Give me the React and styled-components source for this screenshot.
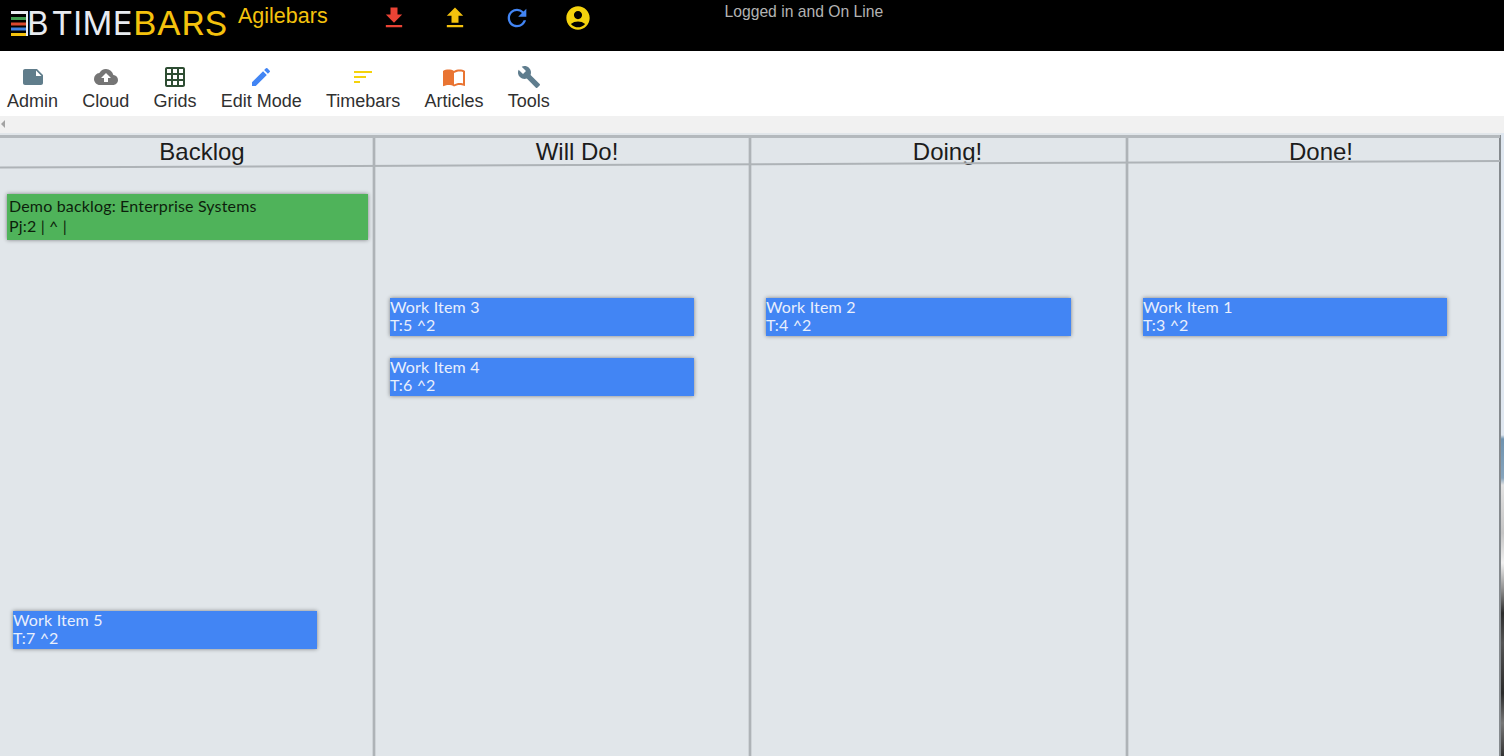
import React from "react";
import styled, { createGlobalStyle } from "styled-components";
import {
  MdFileDownload, MdFileUpload, MdRefresh, MdAccountCircle, MdNote, MdCloudUpload,
  MdGridOn, MdEdit, MdSort, MdImportContacts, MdBuild,
} from "react-icons/md";

const Global = createGlobalStyle`
  html, body { margin: 0; padding: 0; height: 100%; overflow: hidden; background: #e1e6ea; }
  #root { height: 756px; }
  * { box-sizing: border-box; }
`;
const Page = styled.div`
  width: 1504px; height: 756px; display: flex; flex-direction: column; overflow: hidden;
  font-family: "Liberation Sans", Arial, sans-serif;
`;
const Header = styled.header`
  height: 51px; background: #000; display: flex; align-items: flex-start; flex: none;
`;
const Logo = styled.div`
  display: flex; align-items: flex-start; margin: 3px 0 0 11px; width: 217px; height: 36px; white-space: nowrap;
`;
const LogoMark = styled.svg`
  width: 17px; height: 25px; margin-top: 8px; flex: none;
`;
const LogoWord = styled.span`
  font: 400 33px/40px Inter, sans-serif; color: ${p => p.$color};
  letter-spacing: ${p => p.$spacing || 0}px; margin-left: ${p => p.$gap || 0}px;
  transform: scaleX(${p => p.$stretch || 1}); transform-origin: left center;
`;
const AppName = styled.div`
  color: #f4c20d; font-size: 21.5px; line-height: 24px; margin: 4px 0 0 10px; width: 141.5px;
`;
const HeaderIcons = styled.div`
  display: flex; gap: 33.5px; margin-top: 4px; width: 345.5px; flex: none;
`;
const HeaderIcon = styled.span`
  display: flex; width: 28px; height: 28px; color: ${p => p.$color};
  svg { width: 28px; height: 28px; }
`;
const Status = styled.div`
  color: #b3b3b3; font-size: 15.7px; line-height: 16px; margin: 4px 0 0 -0.5px;
`;
const Nav = styled.nav`
  height: 65px; background: #fff; display: flex; gap: 24.2px; padding: 14px 0 0 7px; flex: none;
`;
const NavItem = styled.div`
  display: flex; flex-direction: column; align-items: center;
  color: #303030; font-size: 18px; line-height: 22px; white-space: nowrap;
`;
const NavIcon = styled.span`
  display: flex; width: 24px; height: 24px; margin-bottom: 1px; color: ${p => p.$color};
  svg { width: 24px; height: 24px; }
`;
const ScrollStrip = styled.div`
  height: 17px; background: #f1f1f1; flex: none; display: flex; align-items: center; padding-left: 1px;
`;
const ScrollArrow = styled.span`
  width: 0; height: 0; margin-top: -1px;
  border-top: 4px solid transparent; border-bottom: 4px solid transparent; border-right: 4px solid #a3a3a3;
`;
const Board = styled.main`
  position: relative; flex: 1; display: flex; background: #e1e6ea; padding-top: 2px; overflow: hidden;
`;
const TopRule = styled.div`
  position: absolute; left: 0; top: 2px; width: 1500px; height: 3px; background: #b4b9bd;
`;
const SlantRule = styled.svg`
  position: absolute; left: 0; top: 0; width: 1504px; height: 60px; pointer-events: none;
`;
const Column = styled.section`
  position: relative; width: ${p => p.$width}px; flex: none;
  border-right: 2px solid ${p => p.$line || "#aeb3b7"};
  box-shadow: ${p => (p.$line ? "none" : "1px 0 0 rgba(174,179,183,.35), inset -1px 0 0 rgba(174,179,183,.35)")};
`;
const ColumnTitle = styled.h2`
  margin: 0; padding: 3px 0 0 ${p => p.$shift}px; text-align: center;
  font-size: 24px; line-height: 28px; font-weight: 400; color: #1c1c1c;
`;
const Card = styled.article`
  position: absolute; left: ${p => p.$x}px; top: ${p => p.$y}px; width: ${p => p.$w}px;
  height: ${p => p.$h}px; background: ${p => p.$bg}; color: ${p => p.$fg};
  padding: ${p => p.$pad}; box-shadow: 0 0 4px rgba(0,0,0,.45);
  font-family: Lato, sans-serif; font-size: 16px; letter-spacing: .17px; line-height: ${p => p.$lh}px; white-space: nowrap;
`;
const ImageEdge = styled.div`
  width: 3px; flex: none; margin-top: -2px;
  background: linear-gradient(180deg, #dfe7f0 0 302px, #6f93b0 306px, #86a4bd 345px, #e2e2e2 352px, #c4c4c4 400px, #f0f0f0 430px, #8a8a8a 458px, #2c2c2c 480px, #555 510px, #2a2a2a 560px, #777 590px, #333 623px);
`;

const blue = { $w: 304, $h: 38, $bg: "#4285f4", $fg: "#e9effc", $pad: "0", $lh: 18 };

const navItems = [
  ["Admin", MdNote, "#607d8b"],
  ["Cloud", MdCloudUpload, "#757575"],
  ["Grids", MdGridOn, "#2e4d33"],
  ["Edit Mode", MdEdit, "#4285f4"],
  ["Timebars", MdSort, "#f4d20d"],
  ["Articles", MdImportContacts, "#e97432"],
  ["Tools", MdBuild, "#5f7d8e"],
];

export default function App() {
  return (
    <Page>
      <Global />
      <Header>
        <Logo>
          <LogoMark viewBox="0 0 17 25">
            <rect x="0" y="0" width="17" height="3" fill="#e8ebf0" />
            <rect x="0" y="6" width="15" height="3" fill="#3f9d4f" />
            <rect x="0" y="11.5" width="15" height="3" fill="#d9482f" />
            <rect x="0" y="16.5" width="15" height="3" fill="#3f7fe0" />
            <rect x="0" y="22" width="15" height="3" fill="#f4c20d" />
            <rect x="15" y="0" width="2" height="25" fill="#e8ebf0" />
          </LogoMark>
          <LogoWord $color="#e8ebf0" $gap={-1}>B</LogoWord>
          <LogoWord $color="#e8ebf0" $gap={3} $spacing={0.4}>TIME</LogoWord>
          <LogoWord $color="#f4c20d" $stretch={1.09}>BARS</LogoWord>
        </Logo>
        <AppName>Agilebars</AppName>
        <HeaderIcons>
          <HeaderIcon $color="#ea4335"><MdFileDownload /></HeaderIcon>
          <HeaderIcon $color="#f4c20d"><MdFileUpload /></HeaderIcon>
          <HeaderIcon $color="#4285f4"><MdRefresh /></HeaderIcon>
          <HeaderIcon $color="#f4d20d"><MdAccountCircle /></HeaderIcon>
        </HeaderIcons>
        <Status>Logged in and On Line</Status>
      </Header>
      <Nav>
        {navItems.map(([label, Icon, color]) => (
          <NavItem key={label}>
            <NavIcon $color={color}><Icon /></NavIcon>
            {label}
          </NavItem>
        ))}
      </Nav>
      <ScrollStrip><ScrollArrow /></ScrollStrip>
      <Board>
        <Column $width={375}>
          <ColumnTitle $shift={31}>Backlog</ColumnTitle>
          <Card $x={7} $y={59} $w={361} $h={46} $bg="#4fb35a" $fg="#0d1f0c" $pad="2px 0 0 2px" $lh={20}>
            Demo backlog: Enterprise Systems<br />Pj:2 | ^ |
          </Card>
          <Card {...blue} $x={13} $y={476}>Work Item 5<br />T:7 ^2</Card>
        </Column>
        <Column $width={376}>
          <ColumnTitle $shift={30}>Will Do!</ColumnTitle>
          <Card {...blue} $x={15} $y={163}>Work Item 3<br />T:5 ^2</Card>
          <Card {...blue} $x={15} $y={223}>Work Item 4<br />T:6 ^2</Card>
        </Column>
        <Column $width={377}>
          <ColumnTitle $shift={18}>Doing!</ColumnTitle>
          <Card {...blue} $w={305} $x={15} $y={163}>Work Item 2<br />T:4 ^2</Card>
        </Column>
        <Column $width={373} $line="#858a8e">
          <ColumnTitle $shift={15}>Done!</ColumnTitle>
          <Card {...blue} $x={15} $y={163}>Work Item 1<br />T:3 ^2</Card>
        </Column>
        <ImageEdge />
        <TopRule />
        <SlantRule viewBox="0 0 1504 60">
          <line x1="0" y1="34.5" x2="1500" y2="28" stroke="#aeb3b7" strokeWidth="2" />
        </SlantRule>
      </Board>
    </Page>
  );
}
